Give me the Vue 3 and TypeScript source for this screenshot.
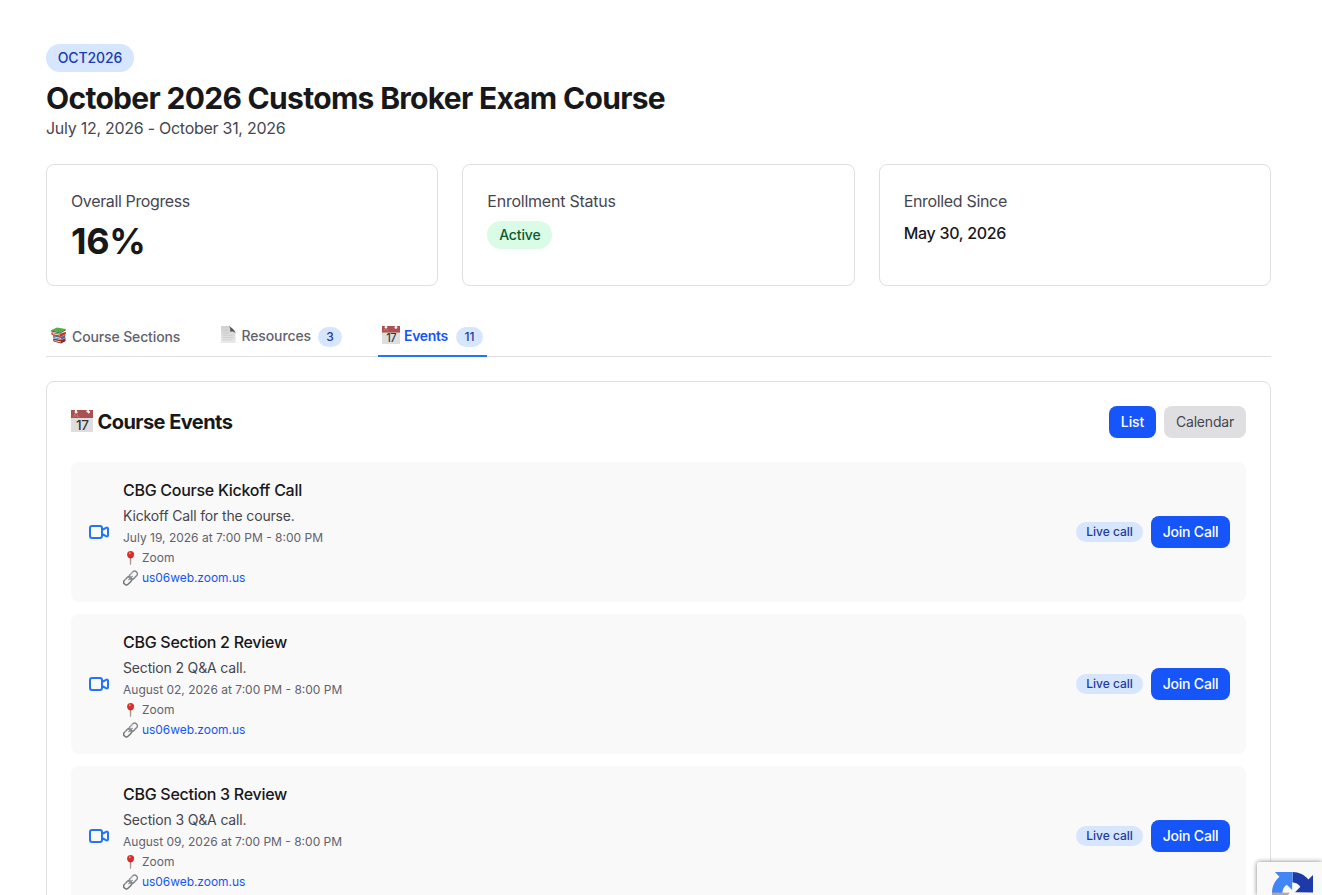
<script setup lang="ts">
interface CourseEvent {
  title: string
  description: string
  when: string
}

const events: CourseEvent[] = [
  { title: 'CBG Course Kickoff Call', description: 'Kickoff Call for the course.', when: 'July 19, 2026 at 7:00 PM - 8:00 PM' },
  { title: 'CBG Section 2 Review', description: 'Section 2 Q&A call.', when: 'August 02, 2026 at 7:00 PM - 8:00 PM' },
  { title: 'CBG Section 3 Review', description: 'Section 3 Q&A call.', when: 'August 09, 2026 at 7:00 PM - 8:00 PM' },
]
</script>

<template>
  <main class="page">
    <span class="pill code">OCT2026</span>
    <h1>October 2026 Customs Broker Exam Course</h1>
    <p class="dates">July 12, 2026 - October 31, 2026</p>

    <section class="stats">
      <div class="card stat">
        <p class="label progress">Overall Progress</p>
        <p class="percent">16%</p>
      </div>
      <div class="card stat">
        <p class="label status">Enrollment Status</p>
        <span class="pill active">Active</span>
      </div>
      <div class="card stat">
        <p class="label enrolled">Enrolled Since</p>
        <p class="since">May 30, 2026</p>
      </div>
    </section>

    <nav class="tabs">
      <a class="tab first">
        <svg class="emoji" width="17" height="17" viewBox="0 0 17 17">
          <path d="M3 11.500l8 1.500 4.500-2v3.200l-4.500 2.300-7.400-1.900z" fill="#8d2a22" />
          <path d="M4.200 13l6.800 1.500v1l-6.500-1.500z" fill="#e3dad0" />
          <path d="M3 8l8 1.800 4.300-2v3l-4.300 2-7.600-1.800z" fill="#44719c" />
          <path d="M4 9.500l7 1.600v.9l-6.500-1.400z" fill="#dfe5e8" />
          <path d="M1.600 5.200l8.200 1.500 6-2v2.600l-5.500 2.600-8-1.900c-1.200-.8-1.200-2-.7-2.800z" fill="#d2342b" />
          <path d="M2.700 6.100l7.300 1.600v.9L2.800 7.200z" fill="#f0dfd6" />
          <path d="M.8 3.300L7 .6l8.800 1.500-5.700 3.300z" fill="#5ba94b" />
          <path d="M.8 3.300l9.300 2.100 5.700-3.300v1.200l-5.700 3.300-9-2z" fill="#2b752d" />
        </svg>
        <span class="sections">Course Sections</span>
      </a>
      <a class="tab">
        <svg class="emoji page-icon" width="17" height="19" viewBox="0 0 17 19">
          <defs>
            <linearGradient id="paper" x1="0" y1="0" x2="0" y2="1">
              <stop offset="0" stop-color="#cfcfcf" />
              <stop offset="1" stop-color="#e9e9e9" />
            </linearGradient>
          </defs>
          <path d="M1 1h8.500l6 6v11H1z" fill="url(#paper)" />
          <path d="M8.500 1.100c2 .8 2 3.800 1.500 5.600 2-.5 4.800 0 5.700 1.500-.6-2.400-4.300-6.200-7.200-7.100z" fill="#55595d" />
          <path d="M3 5.500h5M3 8h6M3 10.300h10M3 12.500h10M3 14.800h9" stroke="#c4c4c4" stroke-width=".6" />
        </svg>
        <span class="resources">Resources</span>
        <span class="count three">3</span>
      </a>
      <a class="tab current">
        <svg class="emoji cal-small" width="18" height="18" viewBox="0 0 22 22">
          <rect width="22" height="22" fill="#dedede" />
          <rect width="22" height="8" fill="#ac5152" />
          <path d="M2 5.800l1.500-2 1.300 2M6 3.500v2.300h2" fill="none" stroke="#c98180" stroke-width=".8" />
          <circle cx="4.800" cy="1.500" r="1.600" fill="#fff" /><circle cx="17" cy="1.800" r="1.700" fill="#fff" />
          <text x="11.200" y="19.500" text-anchor="middle" class="day">17</text>
        </svg>
        <span class="events-label">Events</span>
        <span class="count eleven">11</span>
      </a>
    </nav>

    <section class="card panel">
      <header class="panel-head">
        <h2>
          <svg class="cal-large" width="22" height="22" viewBox="0 0 22 22">
            <rect width="22" height="22" fill="#dedede" />
            <rect width="22" height="8" fill="#ac5152" />
            <path d="M2.500 7l1.500-3 1.300 3M6.500 4v2.800h2" fill="none" stroke="#c98180" stroke-width=".7" />
            <path d="M4.800 0l1.400 2.200-1 1.100-1.200-1zM15.500 1.200l2-.8 1 1.400-.5 1.400z" fill="#fff" stroke="#fff" />
            <text x="11.200" y="19.500" text-anchor="middle" class="day">17</text>
          </svg>
          <span>Course Events</span>
        </h2>
        <div class="switch">
          <button class="btn primary list">List</button>
          <button class="btn muted">Calendar</button>
        </div>
      </header>

      <ul class="events">
        <li v-for="event in events" :key="event.title" class="event">
          <svg class="video" width="24" height="24" viewBox="0 0 24 24" fill="none" stroke="#2174fb" stroke-width="2" stroke-linecap="round" stroke-linejoin="round">
            <path d="M15 10l4.553-2.276A1 1 0 0121 8.618v6.764a1 1 0 01-1.447.894L15 14M5 18h8a2 2 0 002-2V8a2 2 0 00-2-2H5a2 2 0 00-2 2v8a2 2 0 002 2z" />
          </svg>
          <div class="info">
            <h3>{{ event.title }}</h3>
            <p class="description">{{ event.description }}</p>
            <p class="meta">{{ event.when }}</p>
            <p class="meta with-icon">
              <svg width="15" height="16" viewBox="0 0 15 16">
                <path d="M7 7h1l-.2 7.500h-.5z" fill="#8f7770" stroke="#a68d84" stroke-width=".5" />
                <circle cx="7.600" cy="4.500" r="3.500" fill="#dc2f2b" />
                <path d="M5.500 7.300c1.300.7 2.800.7 4.100 0" stroke="#981f1f" stroke-width=".8" fill="none" />
                <circle cx="6.800" cy="3.200" r="1" fill="#f58a80" />
              </svg>
              <span>Zoom</span>
            </p>
            <p class="meta with-icon">
              <svg width="15" height="16" viewBox="0 0 15 16" fill="none">
                <g transform="rotate(-45 7.5 8)">
                  <rect x="-1" y="5.300" width="9" height="5.400" rx="2.700" stroke="#70767a" stroke-width="1.500" />
                  <rect x="7" y="5.300" width="9" height="5.400" rx="2.700" stroke="#85898d" stroke-width="1.500" />
                  <path d="M1.500 5.100h4M9.500 5.100h4" stroke="#d6d9da" stroke-width=".7" />
                  <path d="M4.500 8h6" stroke="#8b9094" stroke-width="1.300" />
                </g>
              </svg>
              <a class="link">us06web.zoom.us</a>
            </p>
          </div>
          <span class="kind">Live call</span>
          <button class="btn primary join">Join Call</button>
        </li>
      </ul>
    </section>

    <aside class="captcha">
      <svg width="41" height="41" viewBox="0 0 64 64">
        <path d="M64 31.955c-.002-.46-.012-.918-.033-1.373V4.630l-7.175 7.175C50.930 4.676 42.070.120 32.146.120l-.284 16.192c.7 0 1.100.053 1.346.153 4.660.368 8.700 2.940 11.078 6.673l-8.323 8.324z" fill="#1c3aa9" />
        <path d="M31.862.120c-.460.002-.918.012-1.374.033H4.537l7.175 7.175C4.583 13.193.027 22.052.027 31.976c0 10.322 4.930 19.493 12.560 25.248l11.885-11.761a15.700 15.700 0 0 1-5.341-4.762c-1.603-2.053-2.912-4.960-2.912-8.722 0-.454.052-.805.152-1.063.368-4.661 2.940-8.700 6.673-11.079l8.324 8.324z" fill="#4285f4" />
        <path d="M.027 31.977c.002.460.012.917.033 1.373v25.951l7.175-7.175c5.866 7.129 14.725 11.685 24.649 11.685 10.321 0 19.492-4.930 25.248-12.560L45.372 39.366a15.700 15.700 0 0 1-4.763 5.341c-2.053 1.603-4.960 2.912-8.722 2.912-.454 0-.804-.053-1.063-.152-4.660-.368-8.700-2.940-11.078-6.674l8.323-8.323z" fill="#ababab" />
      </svg>
    </aside>
  </main>
</template>

<style>
body {
  background: #fff;
  overflow: hidden;
}
</style>

<style scoped>
* {
  box-sizing: border-box;
}
.page {
  width: 1322px;
  height: 895px;
  overflow: hidden;
  padding: 44px 51px 0 46px;
  background: #fff;
  color: #18181b;
  font-family: Inter, "Liberation Sans", sans-serif;
  font-size: 16px;
  line-height: 24px;
}
h1, h2, h3, p, ul {
  margin: 0;
  padding: 0;
}
.pill {
  display: flex;
  align-items: center;
  justify-content: center;
  height: 28px;
  border-radius: 14px;
  font-size: 14px;
  line-height: 20px;
  font-weight: 500;
  white-space: nowrap;
}
.code {
  width: 88px;
  background: #d6e6fe;
  color: #1b3bb5;
  letter-spacing: -0.1px;
}
h1 {
  margin-top: 8px;
  font-size: 30px;
  line-height: 36px;
  font-weight: 700;
  letter-spacing: -0.69px;
  white-space: nowrap;
}
.dates, .label {
  color: #46464f;
  letter-spacing: -0.27px;
}
.progress {
  letter-spacing: -0.37px;
}
.status {
  letter-spacing: -0.24px;
}
.enrolled {
  letter-spacing: -0.33px;
}
.stats {
  display: grid;
  grid-template-columns: repeat(3, 1fr);
  gap: 24px;
  margin-top: 24px;
}
.card {
  border: 1px solid #dfdfe1;
  border-radius: 8px;
  background: #fff;
}
.stat {
  height: 122px;
  padding: 24px;
}
.label {
  margin-bottom: 8px;
}
.percent {
  font-size: 36px;
  line-height: 40px;
  font-weight: 700;
  letter-spacing: -0.3px;
}
.active {
  width: 65px;
  background: #dafbe6;
  color: #0b5a30;
  letter-spacing: -0.15px;
}
.since {
  font-weight: 500;
  letter-spacing: -0.29px;
}
.tabs {
  display: flex;
  gap: 32px;
  height: 47px;
  margin-top: 24px;
  border-bottom: 1px solid #dfdfe1;
}
.tab {
  display: flex;
  align-items: center;
  height: 47px;
  padding: 6px 4px 0;
  border-bottom: 2px solid transparent;
  font-size: 14px;
  line-height: 20px;
  font-weight: 500;
  color: #62626c;
  white-space: nowrap;
}
.first {
  width: 138px;
  padding-top: 9px;
}
.tab:nth-child(2) {
  width: 130px;
}
.current {
  width: 109px;
  border-color: #2174fb;
  color: #1555f5;
}
.sections {
  letter-spacing: -0.13px;
}
.resources {
  margin-left: 0.5px;
  letter-spacing: -0.12px;
}
.events-label {
  font-weight: 600;
  letter-spacing: -0.3px;
}
.emoji {
  flex: none;
  margin-right: 4px;
}
.first .emoji {
  margin-right: 5px;
  margin-top: -3px;
}
.page-icon {
  margin-top: -2px;
}
.cal-small {
  margin-top: -2px;
}
.day {
  font-family: Inter, sans-serif;
  font-size: 13.5px;
  font-weight: 500;
  letter-spacing: -0.5px;
  fill: #35373a;
}
.count {
  margin-top: 2px;
  margin-left: auto;
  height: 20px;
  border-radius: 10px;
  background: #d6e6fe;
  color: #1c3a9f;
  font-size: 12px;
  text-align: center;
}
.three {
  width: 24px;
}
.eleven {
  width: 27px;
}
.panel {
  height: 620px;
  margin-top: 24px;
  padding: 24px;
}
.panel-head {
  display: flex;
  justify-content: space-between;
  height: 32px;
}
h2 {
  display: flex;
  align-items: center;
  gap: 4.5px;
  font-size: 20px;
  line-height: 28px;
  font-weight: 700;
  letter-spacing: -0.55px;
  white-space: nowrap;
}
.cal-large {
  margin-top: -2px;
}
.switch {
  display: flex;
  gap: 8px;
}
.btn {
  flex: none;
  height: 32px;
  padding: 0;
  border: 0;
  border-radius: 8px;
  font: 500 14px/20px Inter, "Liberation Sans", sans-serif;
  letter-spacing: -0.2px;
  white-space: nowrap;
}
.primary {
  background: #1555f9;
  color: #fff;
}
.list {
  width: 47px;
  letter-spacing: -0.1px;
}
.muted {
  width: 82px;
  background: #dfdfe2;
  color: #46464f;
  font-weight: 400;
}
.events {
  display: flex;
  flex-direction: column;
  gap: 12px;
  margin-top: 24px;
  list-style: none;
}
.event {
  display: flex;
  align-items: center;
  height: 140px;
  flex: none;
  padding: 16px;
  border-radius: 8px;
  background: #f9f9f9;
}
.video {
  flex: none;
  margin-right: 12px;
}
.info {
  flex: 1;
}
h3 {
  font-size: 16px;
  line-height: 24px;
  font-weight: 500;
  letter-spacing: -0.28px;
}
.description {
  margin-top: 4px;
  font-size: 14px;
  line-height: 20px;
  color: #46464f;
  letter-spacing: -0.16px;
}
.meta {
  margin-top: 4px;
  font-size: 12px;
  line-height: 16px;
  color: #62626c;
}
.with-icon {
  display: flex;
  gap: 4px;
}
.link {
  color: #1555f5;
  letter-spacing: -0.06px;
}
.kind {
  width: 67px;
  height: 20px;
  margin-right: 8px;
  border-radius: 10px;
  background: #d6e6fe;
  color: #1c3a9f;
  font-size: 12px;
  line-height: 20px;
  font-weight: 500;
  text-align: center;
  white-space: nowrap;
}
.join {
  width: 79px;
}
.captcha {
  position: absolute;
  left: 1257px;
  top: 862px;
  width: 65px;
  height: 33px;
  overflow: hidden;
  padding: 10px 0 0 15px;
  border-radius: 2px 0 0 0;
  background: #f9f9f9;
  box-shadow: 0 0 5px #808080;
}
</style>
